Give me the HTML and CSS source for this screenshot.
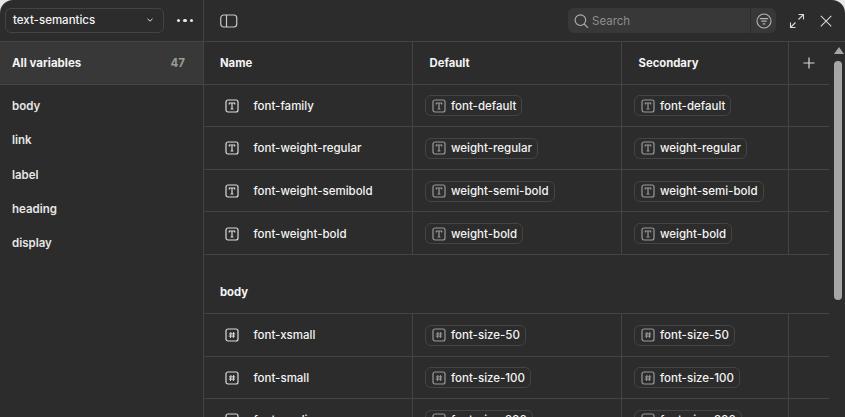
FILE: index.html
```html
<!DOCTYPE html>
<html lang="en">
<head>
    <meta charset="UTF-8">
    <title>Variables</title>
    <link rel="stylesheet" href="styles.css">
</head>
<body>
    <svg class="icon-defs" width="0" height="0">
        <symbol id="type-t" viewBox="0 0 14 14">
            <rect x="1" y="1" width="12" height="12" rx="2" fill="none" stroke="currentColor" stroke-width="1.2"/>
            <path d="M4.300 5.400V4h5.400v1.400M7 4v6M5.600 10h2.800" fill="none" stroke="currentColor" stroke-width="1.200"/>
        </symbol>
        <symbol id="type-num" viewBox="0 0 14 14">
            <rect x="1" y="1" width="12" height="12" rx="2" fill="none" stroke="currentColor" stroke-width="1.2"/>
            <path d="M5.900 4 5.500 10M8.700 4 8.300 10M4 5.900h6.200M3.800 8.100h6.200" fill="none" stroke="currentColor" stroke-width="1"/>
        </symbol>
    </svg>

    <div class="window">
        <!-- Left sidebar -->
        <aside class="sidebar">
            <div class="sidebar-top">
                <div class="collection-select">
                    <span>text-semantics</span>
                    <svg width="8" height="8" viewBox="0 0 8 8"><path d="M1.500 2.800 4 5.200l2.500-2.400" fill="none" stroke="currentColor" stroke-width="1"/></svg>
                </div>
                <div class="more-dots"><i></i><i></i><i></i></div>
            </div>
            <div class="all-vars">
                <span>All variables</span>
                <span class="count">47</span>
            </div>
            <nav class="groups">
                <a>body</a>
                <a>link</a>
                <a>label</a>
                <a>heading</a>
                <a>display</a>
            </nav>
        </aside>

        <main class="content">
            <!-- Toolbar -->
            <div class="toolbar">
                <svg class="panel-icon" width="18" height="14" viewBox="0 0 18 14">
                    <rect x="0.750" y="1" width="16" height="12" rx="3" fill="none" stroke="currentColor" stroke-width="1.2"/>
                    <path d="M6.500 1v12" stroke="currentColor" stroke-width="1.2"/>
                </svg>
                <div class="search">
                    <div class="search-box">
                        <svg width="16" height="16" viewBox="0 0 16 16"><circle cx="6.400" cy="7.200" r="5.300" fill="none" stroke="currentColor" stroke-width="1.100"/><path d="m10.200 11 3.800 3.800" stroke="currentColor" stroke-width="1.100"/></svg>
                        <span>Search</span>
                    </div>
                    <div class="search-filter">
                        <svg width="16" height="16" viewBox="0 0 16 16"><circle cx="8" cy="8" r="7" fill="none" stroke="currentColor" stroke-width="1.100"/><path d="M3.800 5.600h8.400M5.300 8.200h5.400M6.800 10.800h2.400" stroke="currentColor" stroke-width="1.200"/></svg>
                    </div>
                </div>
                <svg class="tool-icon" width="16" height="16" viewBox="0 0 16 16"><path d="M9.500 1.500h5v5M14.500 1.500 9.500 6.500M6.500 14.500h-5v-5M1.500 14.500l5-5" fill="none" stroke="currentColor" stroke-width="1.100"/></svg>
                <svg class="tool-icon close-icon" width="14" height="14" viewBox="0 0 14 14"><path d="m1.800 1.800 10.500 10.500M12.300 1.800 1.800 12.300" fill="none" stroke="currentColor" stroke-width="1.100"/></svg>
            </div>

            <div class="table-area">
                <div class="table">
                    <div class="row head">
                        <div class="cell name-cell">Name</div>
                        <div class="cell">Default</div>
                        <div class="cell">Secondary</div>
                        <div class="cell add-cell">
                            <svg width="12" height="12" viewBox="0 0 12 12"><path d="M6 .5v11M.5 6h11" stroke="currentColor" stroke-width="1.200"/></svg>
                        </div>
                    </div>

                    <div class="row">
                        <div class="cell name-cell"><svg class="var-icon"><use href="#type-t"/></svg>font-family</div>
                        <div class="cell"><span class="token"><svg class="token-icon"><use href="#type-t"/></svg>font-default</span></div>
                        <div class="cell"><span class="token"><svg class="token-icon"><use href="#type-t"/></svg>font-default</span></div>
                        <div class="cell"></div>
                    </div>
                    <div class="row">
                        <div class="cell name-cell"><svg class="var-icon"><use href="#type-t"/></svg>font-weight-regular</div>
                        <div class="cell"><span class="token"><svg class="token-icon"><use href="#type-t"/></svg>weight-regular</span></div>
                        <div class="cell"><span class="token"><svg class="token-icon"><use href="#type-t"/></svg>weight-regular</span></div>
                        <div class="cell"></div>
                    </div>
                    <div class="row">
                        <div class="cell name-cell"><svg class="var-icon"><use href="#type-t"/></svg>font-weight-semibold</div>
                        <div class="cell"><span class="token"><svg class="token-icon"><use href="#type-t"/></svg>weight-semi-bold</span></div>
                        <div class="cell"><span class="token"><svg class="token-icon"><use href="#type-t"/></svg>weight-semi-bold</span></div>
                        <div class="cell"></div>
                    </div>
                    <div class="row">
                        <div class="cell name-cell"><svg class="var-icon"><use href="#type-t"/></svg>font-weight-bold</div>
                        <div class="cell"><span class="token"><svg class="token-icon"><use href="#type-t"/></svg>weight-bold</span></div>
                        <div class="cell"><span class="token"><svg class="token-icon"><use href="#type-t"/></svg>weight-bold</span></div>
                        <div class="cell"></div>
                    </div>

                    <div class="group-title">body</div>

                    <div class="row">
                        <div class="cell name-cell"><svg class="var-icon"><use href="#type-num"/></svg>font-xsmall</div>
                        <div class="cell"><span class="token"><svg class="token-icon"><use href="#type-num"/></svg>font-size-50</span></div>
                        <div class="cell"><span class="token"><svg class="token-icon"><use href="#type-num"/></svg>font-size-50</span></div>
                        <div class="cell"></div>
                    </div>
                    <div class="row">
                        <div class="cell name-cell"><svg class="var-icon"><use href="#type-num"/></svg>font-small</div>
                        <div class="cell"><span class="token"><svg class="token-icon"><use href="#type-num"/></svg>font-size-100</span></div>
                        <div class="cell"><span class="token"><svg class="token-icon"><use href="#type-num"/></svg>font-size-100</span></div>
                        <div class="cell"></div>
                    </div>
                    <div class="row">
                        <div class="cell name-cell"><svg class="var-icon"><use href="#type-num"/></svg>font-medium</div>
                        <div class="cell"><span class="token"><svg class="token-icon"><use href="#type-num"/></svg>font-size-200</span></div>
                        <div class="cell"><span class="token"><svg class="token-icon"><use href="#type-num"/></svg>font-size-200</span></div>
                        <div class="cell"></div>
                    </div>
                </div>

                <div class="scrollbar">
                    <div class="scroll-up"></div>
                    <div class="scroll-thumb"></div>
                </div>
            </div>
        </main>
    </div>
</body>
</html>
```

FILE: styles.css
```css
/* Page */
html, body {
    margin: 0;
    height: 100%;
    background-color: #e8e8e8;
}

body {
    font-family: Inter, "Noto Sans", sans-serif;
    font-size: 11.5px;
    font-weight: 500;
    color: #f4f4f4;
    overflow: hidden;
}

.icon-defs {
    position: absolute;
}

.window {
    display: flex;
    width: 845px;
    height: 417px;
    background-color: #2c2c2c;
    border-radius: 13px 13px 0 0;
    overflow: hidden;
}

/* Sidebar */
.sidebar {
    width: 203px;
    flex-shrink: 0;
    border-right: 1px solid #444;
}

.sidebar-top {
    display: flex;
    align-items: center;
    height: 41px;
    padding: 0 10px 0 5px;
    border-bottom: 1px solid #444;
}

.collection-select {
    display: flex;
    align-items: center;
    justify-content: space-between;
    width: 158.500px;
    height: 25px;
    padding: 0 9px 0 7px;
    border: 1px solid #444;
    border-radius: 6px;
    box-sizing: border-box;
    margin-top: -1px;
}

.collection-select svg {
    color: #ddd;
}

.more-dots {
    display: flex;
    gap: 3px;
    margin-left: auto;
}

.more-dots i {
    width: 3.400px;
    height: 3.400px;
    background-color: #e6e6e6;
    border-radius: 50%;
}

.all-vars {
    display: flex;
    justify-content: space-between;
    align-items: center;
    height: 42px;
    padding: 0 18px 0 12px;
    background-color: #383838;
    border-bottom: 1px solid #444;
    font-weight: 700;
}

.count {
    color: #9a9a9a;
}

.groups {
    display: flex;
    flex-direction: column;
    padding-top: 4px;
}

.groups a {
    height: 34.300px;
    line-height: 34.300px;
    padding-left: 12px;
    color: #e6e6e6;
    font-weight: 600;
}

/* Main area */
.content {
    flex: 1;
    min-width: 0;
}

.toolbar {
    display: flex;
    align-items: center;
    height: 41px;
    padding: 0 12px 0 16px;
    border-bottom: 1px solid #444;
    color: #d8d8d8;
}

.panel-icon {
    margin-right: auto;
    color: #c8c8c8;
}

.search {
    display: flex;
    height: 25px;
    background-color: #383838;
    border-radius: 6px;
    overflow: hidden;
}

.search-box {
    display: flex;
    align-items: center;
    gap: 2px;
    width: 176px;
    padding-left: 6px;
    color: #8c8c8c;
    font-weight: 400;
}

.search-box svg {
    color: #b0b0b0;
}

.search-filter {
    display: flex;
    align-items: center;
    justify-content: center;
    width: 25px;
    border-left: 1px solid #2c2c2c;
    color: #b4b4b4;
}

.tool-icon {
    margin-left: 13px;
}

.close-icon {
    margin-left: 14px;
}

.table-area {
    display: flex;
    height: 375px;
    overflow: hidden;
}

/* Table */
.table {
    width: 625px;
    flex-shrink: 0;
}

.row {
    display: grid;
    grid-template-columns: 209px 209px 167px 40px;
    height: 42.600px;
    box-sizing: border-box;
    border-bottom: 1px solid #444;
}

.cell {
    display: flex;
    align-items: center;
    padding-top: 1px;
    padding-left: 12px;
    border-right: 1px solid #444;
}

.cell:last-child {
    border-right: none;
}

.name-cell {
    padding-left: 16px;
}

.head .cell {
    padding-top: 0;
    font-weight: 700;
    font-size: 11.300px;
    padding-left: 16.500px;
}

.head .name-cell {
    padding-left: 16px;
}

.head .add-cell {
    padding-left: 14px;
    color: #d8d8d8;
}

.var-icon {
    width: 14px;
    height: 14px;
    margin: 0 14.500px 0 5px;
    color: #dcdcdc;
    flex-shrink: 0;
}

.token {
    display: inline-flex;
    align-items: center;
    height: 21px;
    padding: 0 5px 0 6px;
    border: 1px solid #444;
    border-radius: 6px;
    box-sizing: border-box;
    white-space: nowrap;
}

.token-icon {
    width: 14px;
    height: 14px;
    margin-right: 5px;
    color: #999;
    flex-shrink: 0;
}

.group-title {
    height: 59px;
    box-sizing: border-box;
    padding: 30px 0 0 16px;
    border-bottom: 1px solid #444;
    font-weight: 700;
    font-size: 11.300px;
    line-height: 14px;
}

/* Scrollbar */
.scrollbar {
    width: 16px;
    padding: 5px 3px 0 5px;
    box-sizing: border-box;
}

.scroll-up {
    width: 0;
    height: 0;
    margin: 0 auto 7px;
    border-left: 5px solid transparent;
    border-right: 5px solid transparent;
    border-bottom: 7px solid #a6a6a6;
}

.scroll-thumb {
    width: 8px;
    height: 239px;
    margin: 0 auto;
    background-color: #a6a6a6;
    border-radius: 4px;
}
```
